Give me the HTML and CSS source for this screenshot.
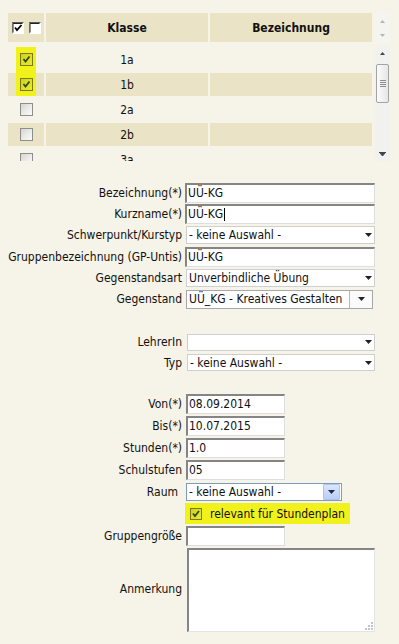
FILE: index.html
```html
<!DOCTYPE html>
<html lang="de">
<head>
<meta charset="utf-8">
<title>Gruppe</title>
<link rel="stylesheet" href="styles.css">
</head>
<body>
<div class="grid">
  <div class="grid-head">
    <div class="cols">
      <div class="th th-check">
        <svg class="hcb" width="12" height="12" viewBox="0 0 12 12"><rect x="0" y="0" width="12" height="12" fill="#fff"/><path d="M0 11.5V0.5H11.5" stroke="#5a5a5a" fill="none"/><path d="M1 10.5V1.5H10.5" stroke="#222" fill="none"/><path d="M3 5.5L5 8L9.5 3" stroke="#000" stroke-width="1.8" fill="none"/></svg>
        <svg class="hcb" width="12" height="12" viewBox="0 0 12 12"><rect x="0" y="0" width="12" height="12" fill="#fff"/><path d="M0 11.5V0.5H11.5" stroke="#5a5a5a" fill="none"/><path d="M1 10.5V1.5H10.5" stroke="#222" fill="none"/></svg>
      </div>
      <div class="th">Klasse</div>
      <div class="th">Bezeichnung</div>
    </div>
    <div class="sb sb-head">
      <div class="sb-btn"><svg width="5" height="3" viewBox="0 0 5 3"><path d="M0 3H5L2.5 0z" fill="#b4b4b4"/></svg></div>
      <div class="sb-btn"><svg width="5" height="3" viewBox="0 0 5 3"><path d="M0 0H5L2.5 3z" fill="#b4b4b4"/></svg></div>
    </div>
  </div>
  <div class="grid-body">
    <div class="rows">
      <div class="hl"></div>
      <div class="tr"><div class="td"><span class="cb cb-on"><svg width="11" height="11" viewBox="0 0 11 11"><path d="M2.5 5L4.5 7.5L8.5 2.5" stroke="#2d4d05" stroke-width="1.8" fill="none"/></svg></span></div><div class="td">1a</div><div class="td"></div></div>
      <div class="tr band"><div class="td"><span class="cb cb-on"><svg width="11" height="11" viewBox="0 0 11 11"><path d="M2.5 5L4.5 7.5L8.5 2.5" stroke="#2d4d05" stroke-width="1.8" fill="none"/></svg></span></div><div class="td">1b</div><div class="td"></div></div>
      <div class="tr"><div class="td"><span class="cb"></span></div><div class="td">2a</div><div class="td"></div></div>
      <div class="tr band"><div class="td"><span class="cb"></span></div><div class="td">2b</div><div class="td"></div></div>
      <div class="tr"><div class="td"><span class="cb"></span></div><div class="td">3a</div><div class="td"></div></div>
    </div>
    <div class="sb">
      <div class="sb-btn"><svg width="5" height="3" viewBox="0 0 5 3"><path d="M0 3H5L2.5 0z" fill="#444"/></svg></div>
      <div class="thumb"><svg width="6" height="7" viewBox="0 0 6 7"><path d="M0 0.5H6M0 2.5H6M0 4.5H6M0 6.5H6" stroke="#8c8c8c"/></svg></div>
      <div class="sb-fill"></div>
      <div class="sb-btn"><svg width="7" height="4" viewBox="0 0 7 4"><path d="M0 0.5H7M1 1H6L3.5 4z" stroke="#444" stroke-width="1" fill="#444"/></svg></div>
    </div>
  </div>
</div>

<div class="form">
  <div class="group g1">
    <div class="lbl">Bezeichnung(*)</div><div class="tb">UÜ-KG</div>
    <div class="lbl">Kurzname(*)</div><div class="tb">UÜ-KG<span class="caret"></span></div>
    <div class="lbl">Schwerpunkt/Kurstyp</div><div class="sel"><span class="val">- keine Auswahl -</span><svg class="arr" width="7" height="4" viewBox="0 0 7 4"><path d="M0 0H7L3.5 4z" fill="#222"/></svg></div>
    <div class="lbl">Gruppenbezeichnung (GP-Untis)</div><div class="tb">UÜ-KG</div>
    <div class="lbl">Gegenstandsart</div><div class="sel"><span class="val">Unverbindliche Übung</span><svg class="arr" width="7" height="4" viewBox="0 0 7 4"><path d="M0 0H7L3.5 4z" fill="#222"/></svg></div>
    <div class="lbl">Gegenstand</div><div class="sel sel-btn"><span class="val">UÜ_KG - Kreatives Gestalten</span><span class="btn"><svg width="7" height="4" viewBox="0 0 7 4"><path d="M0 0H7L3.5 4z" fill="#222"/></svg></span></div>
  </div>

  <div class="group g2">
    <div class="lbl">LehrerIn</div><div class="sel sel-sm"><span class="val"></span><svg class="arr" width="7" height="4" viewBox="0 0 7 4"><path d="M0 0H7L3.5 4z" fill="#222"/></svg></div>
    <div class="lbl">Typ</div><div class="sel sel-sm"><span class="val">- keine Auswahl -</span><svg class="arr" width="7" height="4" viewBox="0 0 7 4"><path d="M0 0H7L3.5 4z" fill="#222"/></svg></div>
  </div>

  <div class="group g3">
    <div class="lbl">Von(*)</div><div class="tb tb-short">08.09.2014</div>
    <div class="lbl">Bis(*)</div><div class="tb tb-short">10.07.2015</div>
    <div class="lbl">Stunden(*)</div><div class="tb tb-short">1.0</div>
    <div class="lbl">Schulstufen</div><div class="tb tb-short">05</div>
    <div class="lbl lbl-raum">Raum</div><div class="sel sel-xp"><span class="val">- keine Auswahl -</span><span class="xpbtn"><svg width="7" height="4" viewBox="0 0 7 4"><path d="M0 0H7L3.5 4z" fill="#1c2a4a"/></svg></span></div>
    <div class="lbl"></div><div class="chk-hl"><span class="cb cb-on cb-sm"><svg width="10" height="10" viewBox="0 0 10 10"><path d="M2 4.5L4 7L8 2" stroke="#2d4d05" stroke-width="1.8" fill="none"/></svg></span><span>relevant für Stundenplan</span></div>
    <div class="lbl">Gruppengröße</div><div class="tb tb-short"></div>
    <div class="lbl">Anmerkung</div><div class="ta"><svg class="grip" width="9" height="9" viewBox="0 0 9 9"><g fill="#c4c4c4"><rect x="7" y="1" width="2" height="2"/><rect x="4" y="4" width="2" height="2"/><rect x="7" y="4" width="2" height="2"/><rect x="1" y="7" width="2" height="2"/><rect x="4" y="7" width="2" height="2"/><rect x="7" y="7" width="2" height="2"/></g></svg></div>
  </div>
</div>
</body>
</html>
```

FILE: styles.css
```css
html, body {
  margin: 0;
  background: #f6f3e8;
}
body {
  font-family: "DejaVu Sans Condensed", "DejaVu Sans", sans-serif;
  font-stretch: condensed;
  font-size: 12px;
  color: #111;
  width: 399px;
  height: 644px;
  overflow: hidden;
}

/* ---------- grid ---------- */
.grid {
  padding: 13px 0 0 8px;
}
.grid-head, .grid-body {
  display: flex;
  gap: 3px;
}
.grid-body {
  margin-top: 3px;
}
.cols, .rows {
  display: grid;
  grid-template-columns: 36px 162px 162px;
  column-gap: 2px;
  width: 364px;
}
.cols {
  height: 29px;
}
.th {
  background: #ebe3c6;
  display: flex;
  align-items: center;
  justify-content: center;
  font-weight: bold;
  color: #111;
}
.th-check {
  gap: 5px;
}
.hcb {
  display: block;
}
.rows {
  height: 115px;
  box-sizing: border-box;
  padding-top: 2px;
  row-gap: 2px;
  grid-auto-rows: 23px;
  overflow: hidden;
  position: relative;
}
.tr {
  display: contents;
}
.td {
  display: flex;
  align-items: center;
  justify-content: center;
}
.band .td {
  background: #ebe3c6;
}
.hl {
  position: absolute;
  left: 8px;
  top: 1px;
  width: 20px;
  height: 49px;
  background: #f1f11c;
}
.cb {
  position: relative;
  display: inline-flex;
  align-items: center;
  justify-content: center;
  width: 13px;
  height: 13px;
  box-sizing: border-box;
  border: 1px solid #8d8d8d;
  background: linear-gradient(135deg, #d4d4d0 0%, #ececea 55%, #fbfbfb 100%);
}
.cb-on {
  border-color: #7b7b16;
  background: linear-gradient(135deg, #cfcf26 0%, #e0e02c 60%, #e8e836 100%);
}
.cb-sm {
  width: 12px;
  height: 12px;
}
.cb svg {
  display: block;
}

/* ---------- scrollbar ---------- */
.sb {
  width: 15px;
  height: 115px;
  background: #f1f1ef;
  display: flex;
  flex-direction: column;
  align-items: center;
}
.sb-head {
  height: 30px;
  background: #f4f4f1;
  justify-content: center;
  padding-top: 1px;
  box-sizing: border-box;
}
.sb-head .sb-btn {
  height: 14px;
}
.sb-btn {
  width: 15px;
  height: 15px;
  display: flex;
  align-items: center;
  justify-content: center;
}
.sb-btn svg {
  display: block;
}
.thumb {
  margin-top: 3px;
  width: 13px;
  height: 39px;
  box-sizing: border-box;
  border: 1px solid #a3a3a3;
  border-radius: 2px;
  background: linear-gradient(to right, #fbfbfb, #e6e6e6);
  display: flex;
  align-items: center;
  justify-content: center;
}
.thumb svg {
  display: block;
}
.sb-fill {
  flex: 1;
}

/* ---------- form ---------- */
.group {
  display: grid;
  grid-template-columns: 182px 190px;
  column-gap: 3px;
  align-items: center;
}
.g1 {
  margin-top: 21px;
  grid-auto-rows: 21.3px;
}
.g2 {
  margin-top: 22px;
  grid-auto-rows: 20.6px;
}
.g3 {
  margin-top: 20px;
  grid-template-rows: repeat(7, 22px) auto;
}
.lbl {
  text-align: right;
  white-space: nowrap;
  color: #111;
}
.lbl-raum {
  padding-right: 4px;
}
.tb {
  height: 20px;
  box-sizing: border-box;
  background: #fff;
  border-top: 2px solid #858585;
  border-left: 2px solid #858585;
  border-right: 1px solid #dedede;
  border-bottom: 1px solid #dedede;
  padding-left: 1px;
  display: flex;
  align-items: center;
  white-space: nowrap;
}
.tb-short {
  width: 99px;
  margin-left: 1px;
}
.caret {
  display: inline-block;
  width: 1px;
  height: 13px;
  background: #000;
  margin-left: 1px;
}
.sel {
  height: 18px;
  box-sizing: border-box;
  margin-left: 1px;
  background: #fff;
  border: 1px solid #cfcfcf;
  display: flex;
  align-items: center;
  padding-left: 2px;
  white-space: nowrap;
}
.sel .val {
  flex: 1;
}
.sel .arr {
  display: block;
  margin-right: 2px;
}
.sel-sm {
  height: 17px;
  margin-left: 2px;
}
.sel-btn {
  width: 187px;
  height: 19px;
  border-color: #a7a7a7;
  padding-right: 0;
}
.sel-btn .btn {
  align-self: stretch;
  width: 22px;
  border-left: 1px solid #b8b8b8;
  display: flex;
  align-items: center;
  justify-content: center;
  background: #fafafa;
}
.sel-xp {
  width: 156px;
  border-color: #7f9db9;
  padding-right: 1px;
}
.xpbtn {
  width: 15px;
  height: 14px;
  border: 1px solid #aec4f0;
  border-radius: 1px;
  background: linear-gradient(#dbe6fc, #b9cdf7);
  display: flex;
  align-items: center;
  justify-content: center;
}
.xpbtn svg {
  display: block;
}
.chk-hl {
  width: 165px;
  height: 21px;
  background: #f1f11c;
  display: flex;
  align-items: center;
  gap: 8px;
  padding-left: 5px;
  box-sizing: border-box;
  white-space: nowrap;
}
.ta {
  position: relative;
  width: 188px;
  height: 84px;
  margin: 1px 0 0 2px;
  box-sizing: border-box;
  background: #fff;
  border-top: 2px solid #858585;
  border-left: 2px solid #858585;
  border-right: 1px solid #e4e4e4;
  border-bottom: 1px solid #e4e4e4;
}
.grip {
  position: absolute;
  right: 1px;
  bottom: 1px;
  display: block;
}
```
